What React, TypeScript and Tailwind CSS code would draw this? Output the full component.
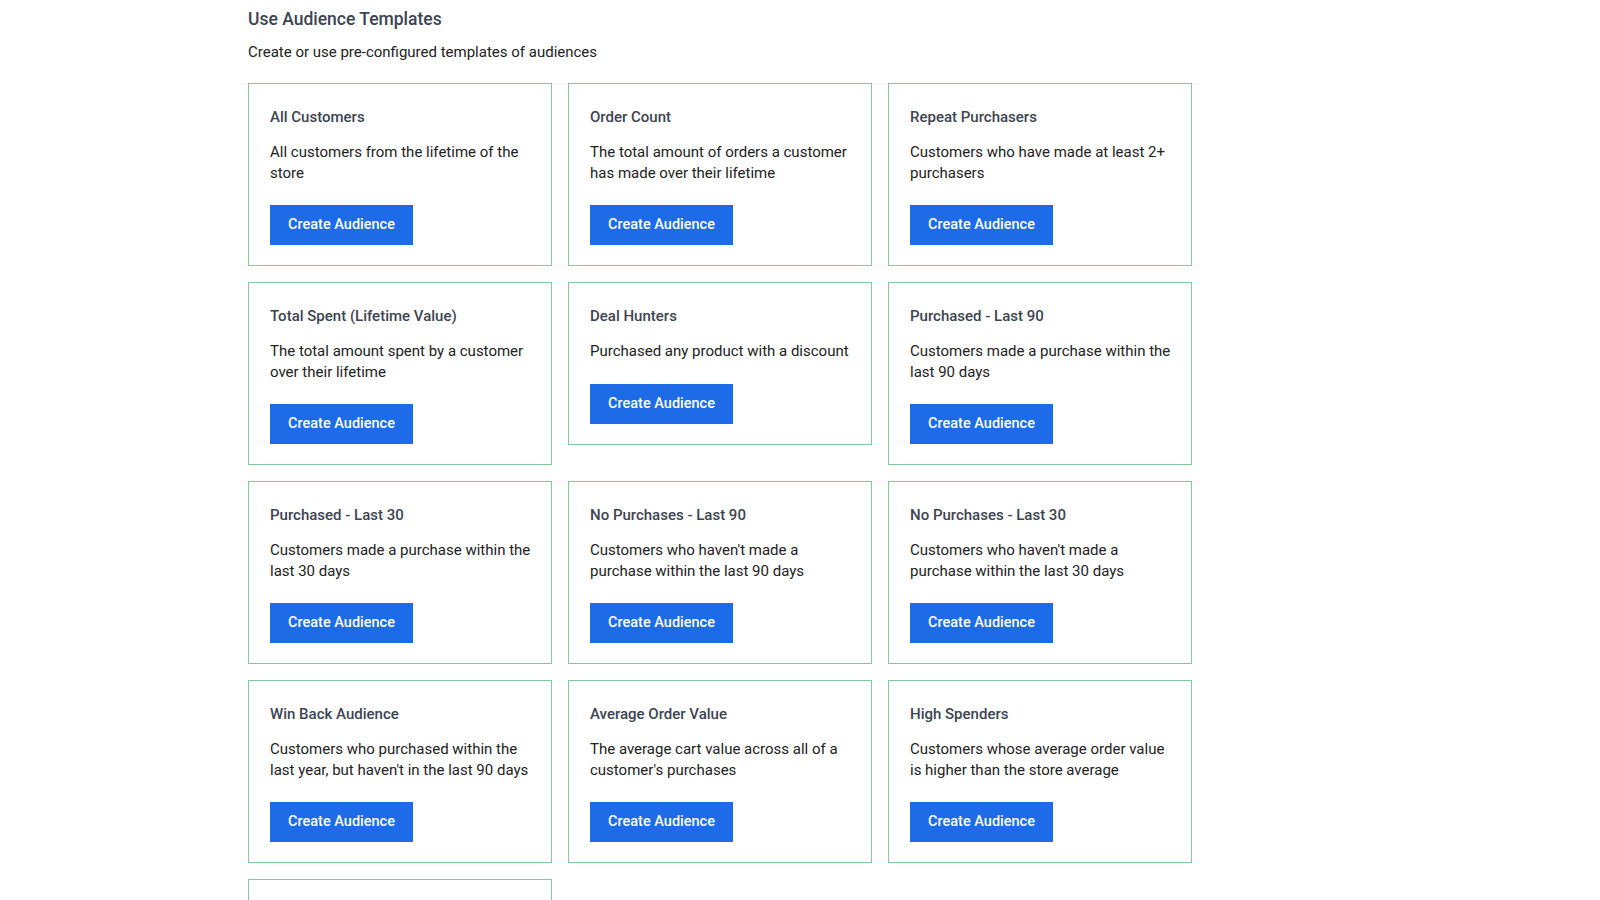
import React from "react";

interface ITemplate {
  title: string;
  description: string;
}

const templates: ITemplate[] = [
  { title: "All Customers", description: "All customers from the lifetime of the store" },
  { title: "Order Count", description: "The total amount of orders a customer has made over their lifetime" },
  { title: "Repeat Purchasers", description: "Customers who have made at least 2+ purchasers" },
  { title: "Total Spent (Lifetime Value)", description: "The total amount spent by a customer over their lifetime" },
  { title: "Deal Hunters", description: "Purchased any product with a discount" },
  { title: "Purchased - Last 90", description: "Customers made a purchase within the last 90 days" },
  { title: "Purchased - Last 30", description: "Customers made a purchase within the last 30 days" },
  { title: "No Purchases - Last 90", description: "Customers who haven't made a purchase within the last 90 days" },
  { title: "No Purchases - Last 30", description: "Customers who haven't made a purchase within the last 30 days" },
  { title: "Win Back Audience", description: "Customers who purchased within the last year, but haven't in the last 90 days" },
  { title: "Average Order Value", description: "The average cart value across all of a customer's purchases" },
  { title: "High Spenders", description: "Customers whose average order value is higher than the store average" },
  { title: "Lapsed Customers", description: "Customers who haven't made a purchase within the last 180 days" },
];

const TemplateCard: React.FC<ITemplate> = ({ title, description }) => {
  return (
    <div className="border border-[#7fcb9c] bg-white pl-[21px] pr-5 pt-[23px] pb-5 flex flex-col items-start">
      <div className="text-[15px] leading-5 font-medium text-[#3d4452]">{title}</div>
      <div className="mt-[15px] text-[15px] leading-[20.5px] text-[#222222]">{description}</div>
      <button className="mt-[22px] h-10 w-[143px] bg-[#1d6be6] text-white text-[14.5px] font-medium">
        Create Audience
      </button>
    </div>
  );
};

export default function App() {
  return (
    <div
      className="min-h-screen bg-white pl-[248px] pt-[7px]"
      style={{ fontFamily: "Roboto, 'Liberation Sans', sans-serif" }}
    >
      <h2 className="text-[17.5px] leading-[24px] font-medium text-[#3d4452]">Use Audience Templates</h2>
      <p className="mt-[11px] text-[15px] leading-5 text-[#222222]">
        Create or use pre-configured templates of audiences
      </p>
      <div className="mt-[21px] w-[944px] grid grid-cols-3 gap-x-4 gap-y-4 items-start">
        {templates.map((t) => (
          <TemplateCard key={t.title} title={t.title} description={t.description} />
        ))}
      </div>
    </div>
  );
}
